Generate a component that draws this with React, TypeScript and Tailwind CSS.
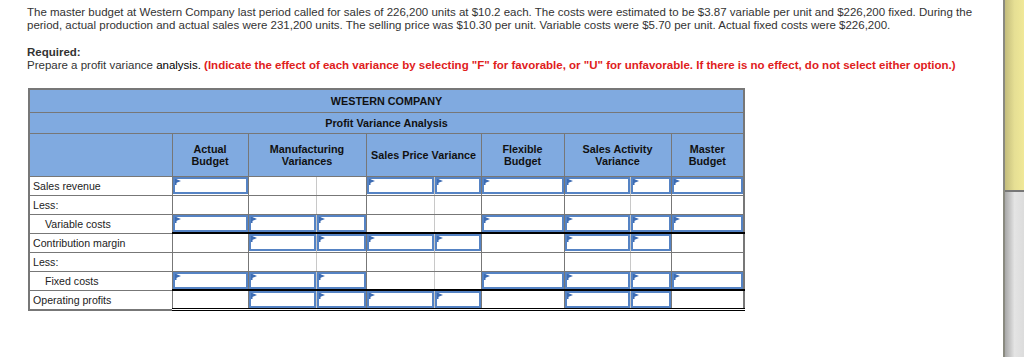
const cols = [
  { w: 'w-[76px]', grp: false },
  { w: 'w-[68px]', grp: true },
  { w: 'w-[50px]', grp: false },
  { w: 'w-[68px]', grp: true },
  { w: 'w-[47px]', grp: false },
  { w: 'w-[83px]', grp: false },
  { w: 'w-[66px]', grp: true },
  { w: 'w-[41px]', grp: false },
  { w: 'w-[73px]', grp: false },
];

type Row = { label: string; indent?: boolean; inputs: number[]; line?: 'single' | 'double' };

const rows: Row[] = [
  { label: 'Sales revenue', inputs: [1, 0, 0, 1, 1, 1, 1, 1, 1] },
  { label: 'Less:', inputs: [0, 0, 0, 0, 0, 0, 0, 0, 0] },
  { label: 'Variable costs', indent: true, inputs: [1, 1, 1, 0, 0, 1, 1, 1, 1], line: 'single' },
  { label: 'Contribution margin', inputs: [0, 1, 1, 1, 1, 0, 1, 1, 0] },
  { label: 'Less:', inputs: [0, 0, 0, 0, 0, 0, 0, 0, 0] },
  { label: 'Fixed costs', indent: true, inputs: [1, 1, 1, 0, 0, 1, 1, 1, 1], line: 'single' },
  { label: 'Operating profits', inputs: [0, 1, 1, 1, 1, 0, 1, 1, 0], line: 'double' },
];

function InputBox() {
  return (
    <div className="relative h-[17px] border-2 border-[#5583c4] bg-white">
      <svg className="absolute left-0 top-0" width="6" height="6" viewBox="0 0 6 6">
        <rect x="0" y="0" width="1.5" height="6" fill="#3d6cb3" />
        <polygon points="1,0 6,2 1,4" fill="#3d6cb3" />
      </svg>
    </div>
  );
}

export default function App() {
  return (
    <div className="flex h-[357px] w-[1024px] overflow-hidden bg-white font-['Liberation_Sans',Arial,sans-serif] text-[#333]">
      <div className="flex-1 pl-[27px] pt-[6px]">
        <p className="text-[11.5px] leading-[13px] pr-[10px]">
          The master budget at Western Company last period called for sales of 226,200 units at $10.2 each. The costs were estimated to be $3.87 variable per unit and $226,200 fixed. During the period, actual production and actual sales were 231,200 units. The selling price was $10.30 per unit. Variable costs were $5.70 per unit. Actual fixed costs were $226,200.
        </p>
        <p className="mt-[14px] text-[11.5px] leading-[13px] font-bold">Required:</p>
        <p className="text-[11.5px] leading-[13px]">
          Prepare a profit variance <span className="text-black">analysis.</span>{' '}
          <span className="font-bold text-[#e0201b]">
            (Indicate the effect of each variance by selecting "F" for favorable, or "U" for unfavorable. If there is no effect, do not select either option.)
          </span>
        </p>

        <table className="mt-[16px] ml-[1px] border-collapse border-2 border-[#777] text-[10.8px] leading-[12px] table-fixed">
          <thead>
            <tr className="bg-[#80aae0]">
              <th colSpan={10} className="h-[23px] border border-[#777] text-center font-bold text-[#111]">
                WESTERN COMPANY
              </th>
            </tr>
            <tr className="bg-[#80aae0]">
              <th colSpan={10} className="h-[21px] border border-[#777] text-center font-bold text-[#111]">
                Profit Variance Analysis
              </th>
            </tr>
            <tr className="bg-[#80aae0] text-[#111]">
              <th className="w-[143px] h-[43px] border border-[#777]" />
              <th className="w-[76px] border border-[#777] font-bold">Actual<br />Budget</th>
              <th colSpan={2} className="border border-[#777] font-bold">Manufacturing<br />Variances</th>
              <th colSpan={2} className="border border-[#777] font-bold">Sales Price Variance</th>
              <th className="w-[83px] border border-[#777] font-bold">Flexible<br />Budget</th>
              <th colSpan={2} className="border border-[#777] font-bold">Sales Activity<br />Variance</th>
              <th className="w-[73px] border border-[#777] font-bold">Master<br />Budget</th>
            </tr>
          </thead>
          <tbody>
            {rows.map((row, ri) => (
              <tr key={ri} className="h-[19px]">
                <td
                  className={`w-[143px] border border-[#777] py-0 text-[10.6px] text-[#222] ${
                    row.indent ? 'pl-[15px]' : 'pl-[3px]'
                  }`}
                >
                  {row.label}
                </td>
                {cols.map((c, ci) => (
                  <td
                    key={ci}
                    className={`${c.w} p-0 border-t border-l border-[#777] ${
                      c.grp ? 'border-r border-r-[#c8c8c8]' : 'border-r'
                    } ${
                      row.line === 'single'
                        ? 'border-b-2 border-b-black'
                        : row.line === 'double'
                        ? 'border-b-[3px] border-double border-b-black'
                        : 'border-b border-b-[#777]'
                    }`}
                  >
                    {row.inputs[ci] ? <InputBox /> : <div className="h-[17px]" />}
                  </td>
                ))}
              </tr>
            ))}
          </tbody>
        </table>
      </div>

      <div className="flex w-[21px] flex-col border-l-2 border-[#8a8a80]">
        <div className="h-[190px] bg-gradient-to-r from-[#c4bd7c] via-[#e6df94] to-[#f0e898]" />
        <div className="h-[2px] bg-[#777]" />
        <div className="flex-1 bg-gradient-to-r from-[#a8a8a8] via-[#e4e4e4] to-[#dcdcdc]" />
      </div>
    </div>
  );
}
